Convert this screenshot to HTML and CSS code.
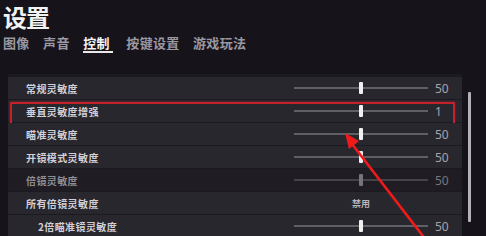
FILE: index.html
```html
<!DOCTYPE html>
<html>
  <head>
    <meta name="viewport" content="width=device-width, initial-scale=1.0" />
    <link rel="stylesheet" href="styles.css">
  </head>
  <body>
    <h1 class="title">设置</h1>
    <nav class="tabs">
      <span class="tab">图像</span>
      <span class="tab">声音</span>
      <span class="tab active">控制</span>
      <span class="tab">按键设置</span>
      <span class="tab">游戏玩法</span>
    </nav>

    <div class="content">
      <div class="panel">
        <div class="row">
          <span class="label">常规灵敏度</span>
          <div class="slider"><span class="thumb"></span></div>
          <span class="value">50</span>
        </div>
        <div class="row marked">
          <span class="label">垂直灵敏度增强</span>
          <div class="slider"><span class="thumb"></span></div>
          <span class="value">1</span>
        </div>
        <div class="row">
          <span class="label">瞄准灵敏度</span>
          <div class="slider"><span class="thumb"></span></div>
          <span class="value">50</span>
        </div>
        <div class="row">
          <span class="label">开镜模式灵敏度</span>
          <div class="slider"><span class="thumb"></span></div>
          <span class="value">50</span>
        </div>
        <div class="row disabled">
          <span class="label">倍镜灵敏度</span>
          <div class="slider"><span class="thumb"></span></div>
          <span class="value">50</span>
        </div>
        <div class="row">
          <span class="label">所有倍镜灵敏度</span>
          <span class="option">禁用</span>
          <span class="value"></span>
        </div>
        <div class="row sub">
          <span class="label">2倍瞄准镜灵敏度</span>
          <div class="slider"><span class="thumb"></span></div>
          <span class="value">50</span>
        </div>
      </div>
      <div class="scrollbar"></div>
    </div>

    <!-- annotation arrow -->
    <svg class="arrow" width="486" height="236" viewBox="0 0 486 236">
      <line x1="426" y1="240" x2="352" y2="144" stroke="#f11a1a" stroke-width="2.6" />
      <polygon points="345,133 359,141 349,149" fill="#f11a1a" />
    </svg>
  </body>
</html>
```

FILE: styles.css
```css
body {
  margin: 0;
  width: 486px;
  height: 236px;
  overflow: hidden;
  background: #17131b;
  font-family: "Noto Sans CJK SC", "Noto Sans", sans-serif;
  color: #d0ced4;
  position: relative;
}
.title {
  margin: 0;
  padding: 3px 0 0 3px;
  font-size: 24px;
  line-height: 28px;
  font-weight: bold;
  color: #f2f2f2;
  letter-spacing: -1px;
}
.tabs {
  display: flex;
  gap: 13.5px;
  padding: 3px 0 0 3px;
  height: 22px;
}
.tab {
  font-size: 13px;
  line-height: 18px;
  font-weight: bold;
  color: #9a98a0;
  letter-spacing: 0.3px;
}
.tab.active {
  color: #f4f4f4;
  border-bottom: 2px solid #e8e8e8;
  height: 17px;
  padding-right: 3px;
}
.content {
  display: flex;
  margin-top: 18px;
}
.panel {
  margin-left: 8px;
  width: 454px;
  padding-top: 3px;
  background: #1c1a21;
  display: flex;
  flex-direction: column;
  gap: 1px;
}
.row {
  display: grid;
  grid-template-columns: 1fr 134px 27px;
  column-gap: 7px;
  align-items: center;
  height: 22px;
  padding-left: 18px;
  background: #29272e;
  position: relative;
}
.row.disabled {
  background: #1f1d23;
}
.row.sub {
  padding-left: 30px;
}
.label {
  font-size: 10px;
  font-weight: bold;
  color: #d2d0d6;
  letter-spacing: 0.4px;
}
.row.disabled .label {
  color: #8f8d94;
}
.slider {
  height: 2px;
  background: #605e66;
  position: relative;
}
.thumb {
  position: absolute;
  left: 65px;
  top: -5px;
  width: 4px;
  height: 12px;
  border-radius: 1px;
  background: #efefef;
}
.row.disabled .thumb {
  background: #77757c;
}
.row.disabled .slider {
  background: #45434a;
}
.value {
  font-family: "Noto Sans", sans-serif;
  font-size: 12px;
  color: #a6a4ab;
}
.row.disabled .value {
  color: #77757c;
}
.option {
  text-align: center;
  font-size: 9px;
  font-weight: bold;
  color: #b8b6bc;
}
.row.marked::after {
  content: "";
  position: absolute;
  left: 2px;
  right: 7px;
  top: 2px;
  bottom: -3px;
  border: 2px solid #c3212c;
  box-shadow: 0 0 2px rgba(200, 30, 40, 0.6);
}
.scrollbar {
  margin: 18px 0 0 6px;
  width: 3px;
  height: 130px;
  background: #b4b2b8;
  border-radius: 1px;
}
.arrow {
  position: absolute;
  left: 0;
  top: 0;
}
```
